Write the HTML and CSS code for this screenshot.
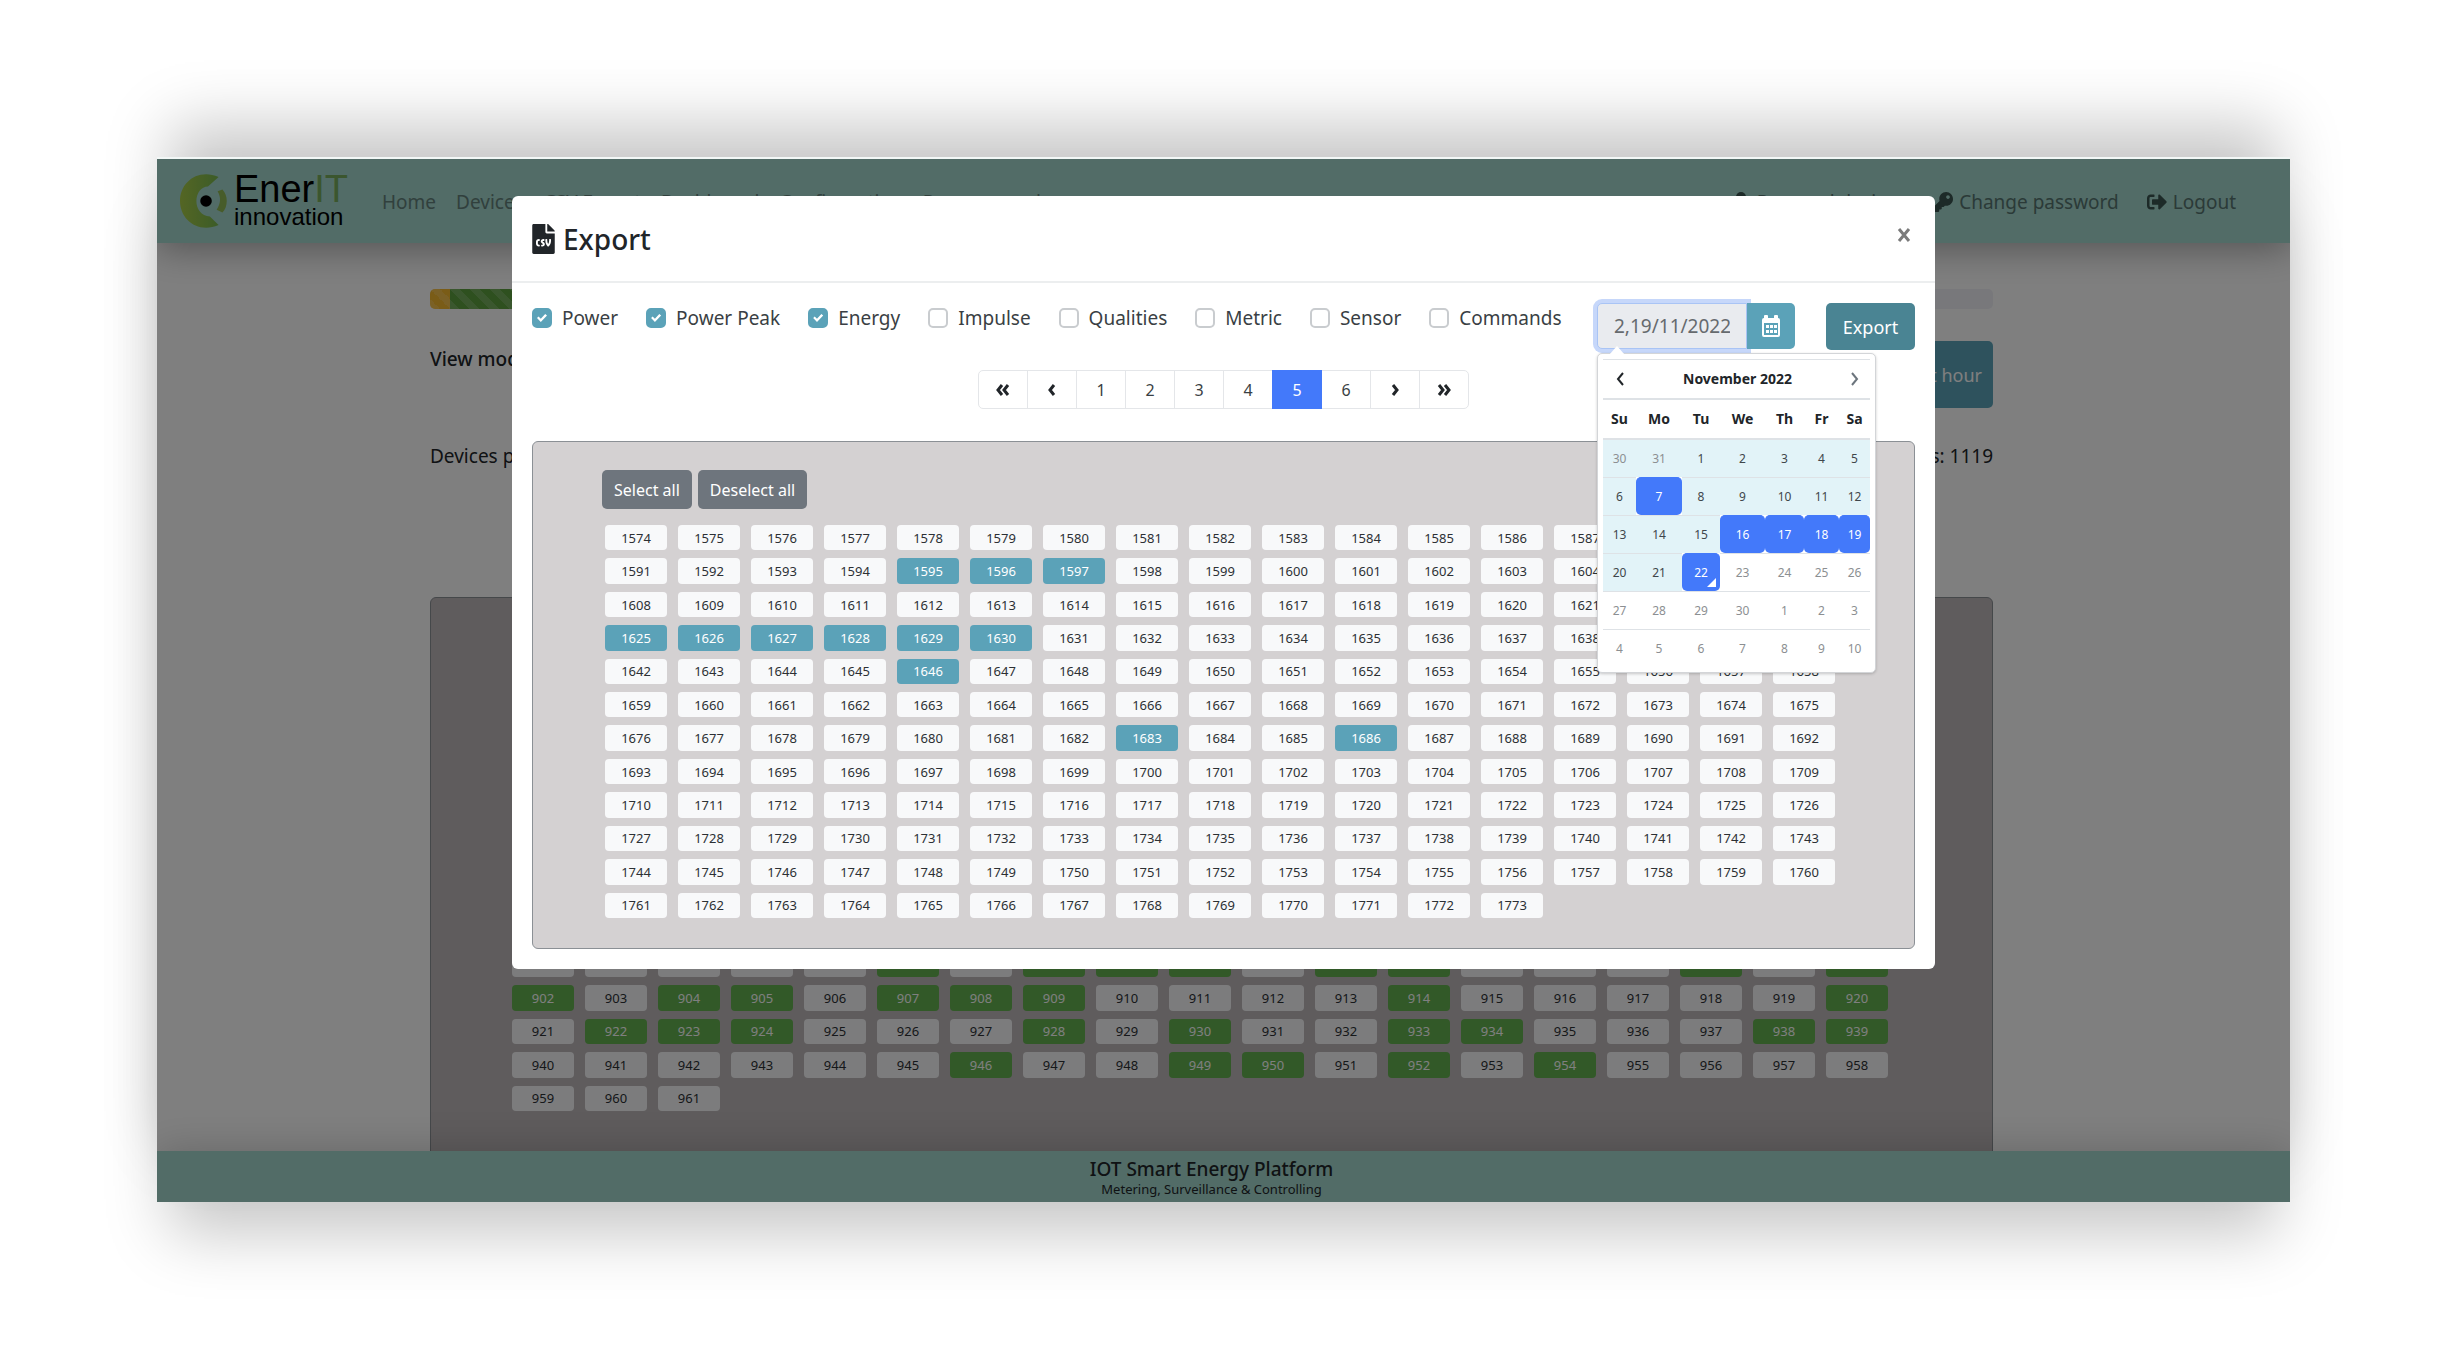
FILE: index.html
```html
<!DOCTYPE html>
<html lang="en">
<head>
<meta charset="utf-8">
<title>EnerIT innovation - Export</title>
<link rel="stylesheet" href="styles.css">
</head>
<body>
<div class="frame">
  <header class="topbar">
    <a class="brand" href="#">
      <svg class="brand-mark" viewBox="0 0 56 56" aria-hidden="true">
        <defs>
          <linearGradient id="leaf" x1="0" y1="0" x2="1" y2="0">
            <stop offset="0" stop-color="#a9cc48"/>
            <stop offset="1" stop-color="#78b850"/>
          </linearGradient>
        </defs>
        <path fill="url(#leaf)" d="M40 3 C18 -6 0 9 0 28 C0 47 18 62 40 53 L31 44 C22 44 17 36 17 28 C17 20 22 13 29 13 Z"/>
        <path fill="#8fb854" d="M39 18 L44 16 C50 22 50 34 44 40 L38 37 C42 31 43 25 39 18 Z"/>
        <circle cx="27" cy="28" r="6" fill="#000"/>
      </svg>
      <span class="brand-text">
        <span class="brand-name">Ener<span class="brand-it">IT</span></span>
        <span class="brand-sub">innovation</span>
      </span>
    </a>
    <nav class="menu">
      <a href="#">Home</a>
      <a href="#">Devices</a>
      <a href="#">CSV Export</a>
      <a href="#">Dashboard</a>
      <a href="#">Configuration</a>
      <a href="#">Programmed</a>
    </nav>
    <nav class="menu menu-user">
      <a href="#"><svg class="ico" viewBox="0 0 448 512" aria-hidden="true"><circle cx="224" cy="128" r="128"/><path d="M0 464c0-97 60-176 134-176h180c74 0 134 79 134 176v24c0 13-11 24-24 24H24c-13 0-24-11-24-24z"/></svg>Personal devices</a>
      <a href="#"><svg class="ico" viewBox="0 0 512 512" aria-hidden="true"><path d="M512 176.001C512 273.203 433.202 352 336 352c-11.22 0-22.19-1.062-32.827-3.069l-24.012 27.014A23.999 23.999 0 0 1 261.223 384H224v40c0 13.255-10.745 24-24 24h-40v40c0 13.255-10.745 24-24 24H24c-13.255 0-24-10.745-24-24v-78.059c0-6.365 2.529-12.47 7.029-16.971l161.802-161.802C163.108 213.814 160 195.271 160 176 160 78.798 238.797.001 335.999 0 433.488-.001 512 78.511 512 176.001zM336 128c0 26.51 21.49 48 48 48s48-21.49 48-48-21.49-48-48-48-48 21.49-48 48z"/></svg>Change password</a>
      <a href="#"><svg class="ico" viewBox="0 0 512 512" aria-hidden="true"><path d="M497 273L329 441c-15 15-41 4.500-41-17v-96H152c-13.300 0-24-10.700-24-24v-96c0-13.300 10.700-24 24-24h136V88c0-21.400 25.900-32 41-17l168 168c9.300 9.400 9.300 24.600 0 34zM192 436v-40c0-6.600-5.400-12-12-12H96c-17.700 0-32-14.300-32-32V160c0-17.700 14.300-32 32-32h84c6.600 0 12-5.400 12-12V76c0-6.600-5.400-12-12-12H96c-53 0-96 43-96 96v192c0 53 43 96 96 96h84c6.600 0 12-5.400 12-12z"/></svg>Logout</a>
    </nav>
  </header>

  <main class="content">
    <div class="progress">
      <div class="bar bar-warn" style="width:20px"></div>
      <div class="bar bar-ok" style="width:70%"></div>
    </div>
    <div class="row">
      <span class="view-mode">View mode:</span>
      <button type="button" class="btn btn-hour">Last hour</button>
    </div>
    <div class="row row-count">
      <span>Devices per page: 200</span>
      <span>Total devices: 1119</span>
    </div>
    <section class="panel panel-back">
      <div class="chips chips-back" id="devices"></div>
    </section>
  </main>

  <footer class="footer">
    <div class="footer-title">IOT Smart Energy Platform</div>
    <div class="footer-sub">Metering, Surveillance &amp; Controlling</div>
  </footer>

  <div class="backdrop">
    <div class="modal" role="dialog" aria-labelledby="modal-title">
      <div class="modal-head">
        <h1 id="modal-title"><svg class="ico-csv" viewBox="0 0 384 512" aria-hidden="true"><path d="M224 136V0H24C10.700 0 0 10.700 0 24v464c0 13.300 10.700 24 24 24h336c13.300 0 24-10.700 24-24V160H248c-13.200 0-24-10.800-24-24zm-96 144c0 4.420-3.580 8-8 8h-8c-8.840 0-16 7.160-16 16v32c0 8.840 7.160 16 16 16h8c4.420 0 8 3.580 8 8v16c0 4.420-3.580 8-8 8h-8c-26.510 0-48-21.490-48-48v-32c0-26.510 21.490-48 48-48h8c4.420 0 8 3.580 8 8v16zm44.270 104H160c-4.420 0-8-3.580-8-8v-16c0-4.420 3.580-8 8-8h12.270c5.950 0 10.410-3.500 10.410-6.620 0-1.300-.75-2.660-2.120-3.840l-21.890-18.770c-8.470-7.220-13.330-17.480-13.330-28.140 0-21.300 19.020-38.620 42.410-38.620H200c4.420 0 8 3.580 8 8v16c0 4.420-3.580 8-8 8h-12.270c-5.950 0-10.410 3.500-10.410 6.620 0 1.300.75 2.660 2.120 3.840l21.890 18.770c8.470 7.220 13.330 17.480 13.330 28.140.01 21.290-19 38.620-42.390 38.620zM256 264v20.800c0 20.270 5.700 40.170 16 56.880 10.300-16.700 16-36.610 16-56.880V264c0-4.420 3.580-8 8-8h16c4.420 0 8 3.580 8 8v20.800c0 35.480-12.880 68.890-36.280 94.090-3.020 3.250-7.270 5.110-11.720 5.110s-8.700-1.860-11.720-5.110c-23.400-25.200-36.280-58.610-36.280-94.090V264c0-4.420 3.580-8 8-8h16c4.420 0 8 3.580 8 8zm121-159L279.100 7c-4.500-4.500-10.600-7-17-7H256v128h128v-6.100c0-6.300-2.500-12.400-7-16.900z"/></svg>Export</h1>
        <button type="button" class="close" aria-label="Close"><svg viewBox="0 0 14 14" aria-hidden="true"><path d="M2 1 L12 13 M12 1 L2 13"/></svg></button>
      </div>
      <div class="modal-body">
        <div class="controls">
          <div class="checks">
            <label><input type="checkbox" checked>Power</label>
            <label><input type="checkbox" checked>Power Peak</label>
            <label><input type="checkbox" checked>Energy</label>
            <label><input type="checkbox">Impulse</label>
            <label><input type="checkbox">Qualities</label>
            <label><input type="checkbox">Metric</label>
            <label><input type="checkbox">Sensor</label>
            <label><input type="checkbox">Commands</label>
          </div>
          <div class="date">
            <input type="text" class="date-input" value="2,19/11/2022" aria-label="Dates" readonly>
            <button type="button" class="date-btn" aria-label="Open calendar">
              <svg viewBox="0 0 18 22" aria-hidden="true">
                <path fill-rule="evenodd" d="M3 0h2q1 0 1 1v2h6V1q0-1 1-1h2q1 0 1 1v2q2 0 2 2v15q0 2-2 2H2q-2 0-2-2V5q0-2 2-2V1q0-1 1-1zM2 8v12h14V8z"/>
                <path d="M4 10h3v3H4zM8 10h3v3H8zM12 10h3v3h-3zM4 15h3v3H4zM8 15h3v3H8zM12 15h3v3h-3z"/>
              </svg>
            </button>
            <div class="picker">
              <table>
                <colgroup><col class="c33"><col class="c46"><col class="c38"><col class="c45"><col class="c39"><col class="c35"><col class="c31"></colgroup>
                <thead>
                  <tr>
                    <th><button type="button" class="nav" aria-label="Previous month"><svg viewBox="0 0 8 14" aria-hidden="true"><path d="M7 1 L2 7 L7 13"/></svg></button></th>
                    <th colspan="5">November 2022</th>
                    <th><button type="button" class="nav nav-off" aria-label="Next month"><svg viewBox="0 0 8 14" aria-hidden="true"><path d="M1 1 L6 7 L1 13"/></svg></button></th>
                  </tr>
                  <tr class="days"><th>Su</th><th>Mo</th><th>Tu</th><th>We</th><th>Th</th><th>Fr</th><th>Sa</th></tr>
                </thead>
                <tbody>
                  <tr><td class="in off">30</td><td class="in off">31</td><td class="in">1</td><td class="in">2</td><td class="in">3</td><td class="in">4</td><td class="in">5</td></tr>
                  <tr><td class="in">6</td><td class="on">7</td><td class="in">8</td><td class="in">9</td><td class="in">10</td><td class="in">11</td><td class="in">12</td></tr>
                  <tr><td class="in">13</td><td class="in">14</td><td class="in">15</td><td class="on">16</td><td class="on">17</td><td class="on">18</td><td class="on">19</td></tr>
                  <tr><td class="in">20</td><td class="in">21</td><td class="on today">22</td><td class="off">23</td><td class="off">24</td><td class="off">25</td><td class="off">26</td></tr>
                  <tr><td class="off">27</td><td class="off">28</td><td class="off">29</td><td class="off">30</td><td class="off">1</td><td class="off">2</td><td class="off">3</td></tr>
                  <tr><td class="off">4</td><td class="off">5</td><td class="off">6</td><td class="off">7</td><td class="off">8</td><td class="off">9</td><td class="off">10</td></tr>
                </tbody>
              </table>
            </div>
          </div>
          <button type="button" class="btn btn-export">Export</button>
        </div>

        <nav class="pages" aria-label="Pages">
          <a href="#" aria-label="First"><svg viewBox="0 0 14 12" aria-hidden="true"><path d="M6 1 L2 6 L6 11 M12 1 L8 6 L12 11"/></svg></a>
          <a href="#" aria-label="Previous"><svg viewBox="0 0 14 12" aria-hidden="true"><path d="M9 1 L5 6 L9 11"/></svg></a>
          <a href="#">1</a>
          <a href="#">2</a>
          <a href="#">3</a>
          <a href="#">4</a>
          <a href="#" class="current" aria-current="page">5</a>
          <a href="#">6</a>
          <a href="#" aria-label="Next"><svg viewBox="0 0 14 12" aria-hidden="true"><path d="M5 1 L9 6 L5 11"/></svg></a>
          <a href="#" aria-label="Last"><svg viewBox="0 0 14 12" aria-hidden="true"><path d="M2 1 L6 6 L2 11 M8 1 L12 6 L8 11"/></svg></a>
        </nav>

        <section class="panel panel-front">
          <div class="picks">
            <button type="button" class="btn btn-grey">Select all</button>
            <button type="button" class="btn btn-grey">Deselect all</button>
          </div>
          <div class="chips chips-front" id="export-devices"></div>
        </section>
      </div>
    </div>
  </div>
</div>
<script src="script.js"></script>
</body>
</html>
```
FILE: styles.css
```css
* { box-sizing: border-box; }

body {
  margin: 0;
  padding: 157px;
  background: #fff;
  color: #212529;
  font-family: "Noto Sans", "Open Sans", sans-serif;
  font-size: 19px;
  line-height: 28px;
}

button, input { font: inherit; margin: 0; }
a { color: inherit; text-decoration: none; }

.frame {
  position: relative;
  display: flex;
  flex-direction: column;
  height: calc(100vh - 314px);
  border-top: 2px solid #f2f7f6;
  background: #fff;
  box-shadow: 0 44px 60px -12px rgba(0, 0, 0, .22), 0 -44px 60px -12px rgba(0, 0, 0, .22);
  overflow: hidden;
}

/* top bar */
.topbar {
  display: flex;
  align-items: center;
  flex: none;
  height: 84px;
  padding: 0 54px 0 23px;
  background: #a4d8ce;
  box-shadow: 0 6px 36px rgba(0, 0, 0, .35);
  z-index: 1;
}
.brand { display: flex; align-items: center; color: #000; }
.brand-mark { width: 54px; height: 54px; overflow: visible; }
.brand-text {
  display: flex;
  flex-direction: column;
  width: 114px;
  font-family: "Liberation Sans", Arial, sans-serif;
}
.brand-name { font-size: 38px; line-height: 32px; }
.brand-it { color: #77ad5c; }
.brand-sub { font-size: 24px; line-height: 24px; }
.menu { display: flex; gap: 20px; margin-left: 34px; padding-top: 2px; color: #62817b; white-space: nowrap; }
.menu-user { gap: 28px; margin-left: auto; color: #567570; }
.menu-user a { display: flex; align-items: center; gap: 6px; }
.ico { width: 20px; height: 20px; fill: #3a5450; }

/* page behind the dialog */
.content {
  flex: 1;
  min-height: 0;
  overflow: hidden;
  padding: 46px 297px 0 273px;
}
.progress { display: flex; height: 20px; border-radius: 5px; overflow: hidden; background: #f0f1f7; }
.bar {
  background-image: linear-gradient(45deg, rgba(255,255,255,.15) 25%, transparent 25%, transparent 50%, rgba(255,255,255,.15) 50%, rgba(255,255,255,.15) 75%, transparent 75%);
  background-size: 20px 20px;
}
.bar-warn { background-color: #f5b82e; }
.bar-ok { background-color: #5da03f; }
.row { display: flex; justify-content: space-between; align-items: flex-start; margin-top: 32px; }
.row-count { margin-top: 34px; }
.view-mode { padding-top: 4px; font-weight: 500; }
.btn { border: 0; border-radius: 5px; color: #fff; cursor: pointer; }
.btn-hour { height: 67px; padding: 0 11px; background: #5ca4ba; font-size: 18px; }

.panel { border: 1px solid #8b9095; border-radius: 6px; background: #d4d1d2; }
.panel-back { margin-top: 127px; padding: 153px 104px 65px 81px; background: #beb8ba; }

.chips { display: grid; gap: 8px 11px; grid-auto-rows: minmax(0, 1fr); }
.chips-front { grid-template-columns: repeat(17, minmax(0, 1fr)); height: 393px; }
.chips-back { grid-template-columns: repeat(19, minmax(0, 1fr)); height: 360px; }
.chip {
  padding: 0;
  border: 0;
  border-radius: 4px;
  background: #f8f9fa;
  color: #2c3034;
  font-size: 13px;
  line-height: 18px;
  cursor: pointer;
}
.chip.picked { background: #5ba2b8; color: #fff; }
.chip.active { background: #64b250; color: #fff; }

.footer {
  flex: none;
  padding: 6px 24px 5px 0;
  background: #a4d8ce;
  box-shadow: 0 0 40px rgba(0, 0, 0, .2);
  text-align: center;
  z-index: 1;
}
.footer-title { font-weight: 500; line-height: 24px; }
.footer-sub { font-size: 13px; line-height: 16px; }

/* dialog */
.backdrop {
  position: absolute;
  inset: 0;
  z-index: 2;
  padding-top: 37px;
  background: rgba(0, 0, 0, .5);
}
.modal { max-width: 1423px; margin: 0 auto; border-radius: 6px; background: #fff; }
.modal-head {
  display: flex;
  justify-content: space-between;
  align-items: center;
  height: 87px;
  padding: 0 20px;
  border-bottom: 2px solid #eceeef;
}
.modal-head h1 {
  display: flex;
  align-items: center;
  gap: 8px;
  margin: 0;
  font-size: 28px;
  font-weight: 500;
  line-height: 36px;
}
.ico-csv { width: 23px; height: 30px; fill: #212529; }
.close { display: flex; padding: 4px; margin-bottom: 8px; border: 0; background: none; cursor: pointer; }
.close svg { width: 14px; height: 14px; fill: none; stroke: #7a7a7a; stroke-width: 3; }
.modal-body { padding: 20px; }

.controls { display: flex; align-items: flex-start; }
.checks { display: flex; gap: 28px; color: #3a3f44; white-space: nowrap; line-height: 30px; }
.checks label { display: flex; align-items: center; gap: 10px; }
.checks input {
  display: grid;
  place-items: center;
  appearance: none;
  width: 20px;
  height: 20px;
  border: 2px solid #c9cccf;
  border-radius: 5px;
  background: #fff;
}
.checks input:checked { border-color: #5ba2b8; background: #5ba2b8; }
.checks input:checked::before {
  content: "";
  width: 10px;
  height: 8px;
  background: #fff;
  clip-path: polygon(0 50%, 15% 32%, 38% 58%, 82% 0, 100% 18%, 38% 100%);
}

.date { position: relative; display: flex; width: 198px; margin-left: auto; }
.date-input {
  width: 150px;
  height: 46px;
  padding: 0 16px;
  border: 1px solid #a9c4f5;
  border-radius: 5px 0 0 5px;
  outline: 0;
  background: #e9ebef;
  color: #666a6e;
  box-shadow: 0 0 0 4px #c6d7fa;
}
.date-btn {
  display: grid;
  place-items: center;
  width: 48px;
  height: 46px;
  padding: 0;
  border: 0;
  border-radius: 0 5px 5px 0;
  background: #5ba2b8;
  z-index: 1;
}
.date-btn svg { width: 18px; height: 22px; fill: #fff; }
.btn-export { width: 89px; height: 47px; margin-left: 31px; background: #4a8493; font-size: 18px; }

.picker {
  position: absolute;
  top: 50px;
  left: 0;
  z-index: 2;
  width: 279px;
  padding: 5px;
  border: 1px solid #d3d5d8;
  border-radius: 5px;
  background: #fff;
  box-shadow: 0 1px 3px rgba(0, 0, 0, .2);
}
.picker::before {
  content: "";
  position: absolute;
  top: -8px;
  left: 11px;
  width: 16px;
  height: 9px;
  background: #fff;
  clip-path: polygon(50% 0, 100% 100%, 0 100%);
}
.picker table { width: 267px; border-collapse: separate; border-spacing: 0; table-layout: fixed; }
.c31 { width: 31px; }
.c33 { width: 33px; }
.c35 { width: 35px; }
.c38 { width: 38px; }
.c39 { width: 39px; }
.c45 { width: 45px; }
.c46 { width: 46px; }
.picker th, .picker td { height: 38px; padding: 0; border-top: 1px solid #dee2e6; text-align: center; line-height: 18px; }
.picker th { height: 39px; font-size: 14px; font-weight: 700; }
.picker .days th { height: 41px; border-top: 2px solid #dee2e6; border-bottom: 1px solid #dee2e6; }
.picker td { position: relative; color: #40464b; font-size: 12px; }
.picker td.off { color: #8c8f92; }
.picker td.in { background: #e2f3f8; }
.picker td.on { border-radius: 5px; border-top-color: #4379fa; background: #4379fa; color: #fff; }
.today::after {
  content: "";
  position: absolute;
  right: 4px;
  bottom: 4px;
  width: 9px;
  height: 9px;
  background: #fff;
  clip-path: polygon(100% 0, 100% 100%, 0 100%);
}
.nav { display: block; margin: 0 auto; padding: 0; border: 0; background: none; }
.nav svg { display: block; width: 8px; height: 14px; fill: none; stroke: #212529; stroke-width: 2; }
.nav-off svg { stroke: #6c757d; }

.pages { display: flex; justify-content: center; margin-top: 20px; font-size: 16px; }
.pages a {
  display: grid;
  place-items: center;
  width: 50px;
  height: 39px;
  margin-right: -1px;
  border: 1px solid #e4e6e9;
  color: #3a3f44;
}
.pages a:first-child { border-radius: 5px 0 0 5px; }
.pages a:last-child { margin-right: 0; border-radius: 0 5px 5px 0; }
.pages .current { border-color: #4379fa; background: #4379fa; color: #fff; z-index: 1; }
.pages svg { width: 14px; height: 12px; fill: none; stroke: #212529; stroke-width: 3; }

.panel-front { margin-top: 32px; padding: 28px 79px 30px 72px; }
.picks { display: flex; gap: 6px; margin: 0 0 16px -3px; }
.btn-grey { height: 39px; padding: 0 12px; background: #6e757d; font-size: 16px; }
```
FILE: script.js
```js
// Fills a grid with one button per device number in [from, to].
function fillChips(id, from, to, marked, markClass) {
  const grid = document.getElementById(id);
  for (let n = from; n <= to; n++) {
    const chip = document.createElement("button");
    chip.type = "button";
    chip.className = marked.includes(n) ? "chip " + markClass : "chip";
    chip.textContent = n;
    grid.append(chip);
  }
}

fillChips("export-devices", 1574, 1773,
  [1595, 1596, 1597, 1625, 1626, 1627, 1628, 1629, 1630, 1646, 1683, 1686], "picked");

fillChips("devices", 769, 961,
  [888, 890, 891, 892, 894, 895, 899, 901,
   902, 904, 905, 907, 908, 909, 914, 920,
   922, 923, 924, 928, 930, 933, 934, 938, 939,
   946, 949, 950, 952, 954], "active");
```
